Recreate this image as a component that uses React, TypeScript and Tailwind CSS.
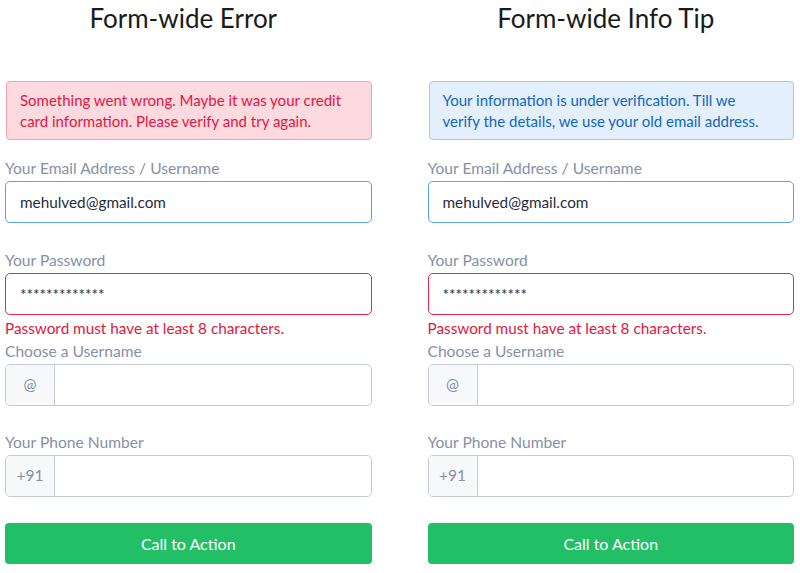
import React from 'react';

type Variant = 'error' | 'info';

function Field({
  label,
  value,
  addon,
  state,
  error,
}: {
  label: string;
  value?: string;
  addon?: string;
  state?: 'focus' | 'invalid';
  error?: string;
}) {
  const border =
    state === 'focus'
      ? 'border-[#5aa2e6]'
      : state === 'invalid'
        ? 'border-[#e8284a]'
        : 'border-[#c3cbd8]';
  return (
    <div className="flex flex-col">
      <label className="h-5 mb-[3px] text-[15.6px] leading-5 text-[#8591a6]">{label}</label>
      <div className={`flex h-[42px] rounded-[5px] border ${border} bg-white overflow-hidden`}>
        {addon && (
          <div className="w-[49px] shrink-0 flex items-center justify-center bg-[#f7f8fa] border-r border-[#c3cbd8] text-[15.5px] text-[#8591a6]">
            {addon}
          </div>
        )}
        <div className="flex-1 flex items-center px-[14px] text-[15.3px] text-[#1f2d3d]">{value}</div>
      </div>
      {error && (
        <p className="mt-[3px] h-5 text-[15.3px] leading-5 text-[#e3173e]">{error}</p>
      )}
    </div>
  );
}

function FormColumn({ title, variant, message }: { title: string; variant: Variant; message: string }) {
  const alert =
    variant === 'error'
      ? 'bg-[#fdd9e0] border-[#f3a0ae] text-[#e3173e]'
      : 'bg-[#e3effb] border-[#9ccaf2] text-[#1466c0]';
  return (
    <div className="flex flex-col">
      <h2 className="h-8 mt-[2px] pr-[10px] text-center text-[26px] leading-8 text-[#1a1a1a]">{title}</h2>
      <div className={`mt-[47px] ml-px h-[59px] rounded-[4px] border pl-[13px] pr-[22px] pt-[8px] text-[15px] leading-[21px] ${alert}`}>
        {message}
      </div>
      <div className="mt-[18px]">
        <Field label="Your Email Address / Username" value="mehulved@gmail.com" state="focus" />
      </div>
      <div className="mt-[27px]">
        <Field
          label="Your Password"
          value="*************"
          state="invalid"
          error="Password must have at least 8 characters."
        />
      </div>
      <div className="mt-[3px]">
        <Field label="Choose a Username" addon="@" />
      </div>
      <div className="mt-[26px]">
        <Field label="Your Phone Number" addon="+91" />
      </div>
      <button className="mt-[26px] h-[41px] rounded-[4px] bg-[#22bf67] text-white text-[16px]">
        Call to Action
      </button>
    </div>
  );
}

export default function App() {
  return (
    <div className="w-[800px] h-[573px] bg-white font-['Lato',sans-serif] overflow-hidden">
      <div className="grid grid-cols-2 gap-[56px] pl-[5px] pr-[6px]">
        <FormColumn
          title="Form-wide Error"
          variant="error"
          message="Something went wrong. Maybe it was your credit card information. Please verify and try again."
        />
        <FormColumn
          title="Form-wide Info Tip"
          variant="info"
          message="Your information is under verification. Till we verify the details, we use your old email address."
        />
      </div>
    </div>
  );
}
